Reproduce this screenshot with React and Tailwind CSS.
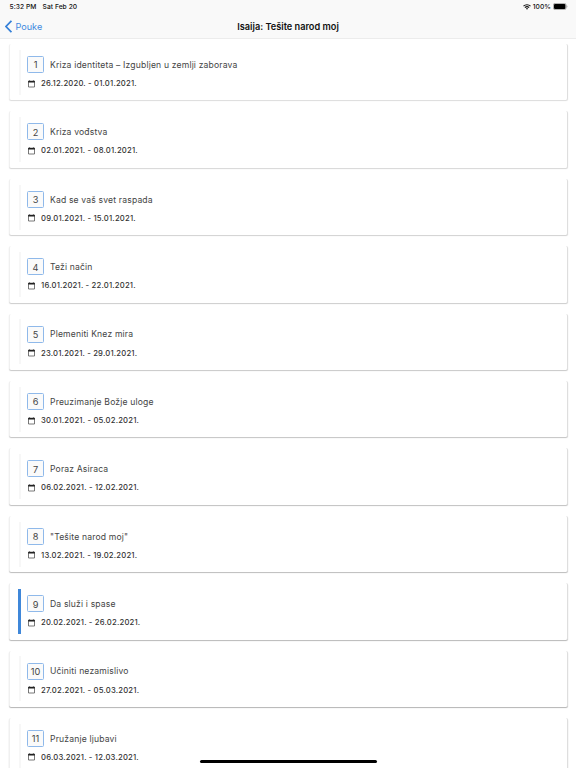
import React from 'react';

const lessons = [
  { title: 'Kriza identiteta – Izgubljen u zemlji zaborava', date: '26.12.2020. - 01.01.2021.', shadow: 'shadow-[0_1px_1px_#dcdcdc]' },
  { title: 'Kriza vođstva', date: '02.01.2021. - 08.01.2021.', shadow: 'shadow-[0_1px_1px_#d6d6d6]' },
  { title: 'Kad se vaš svet raspada', date: '09.01.2021. - 15.01.2021.', shadow: 'shadow-[0_1px_1px_#d1d1d1]' },
  { title: 'Teži način', date: '16.01.2021. - 22.01.2021.', shadow: 'shadow-[0_1px_1px_#cccccc]' },
  { title: 'Plemeniti Knez mira', date: '23.01.2021. - 29.01.2021.', shadow: 'shadow-[0_1px_1px_#c8c8c8]' },
  { title: 'Preuzimanje Božje uloge', date: '30.01.2021. - 05.02.2021.', shadow: 'shadow-[0_1px_1px_#c4c4c4]' },
  { title: 'Poraz Asiraca', date: '06.02.2021. - 12.02.2021.', shadow: 'shadow-[0_1px_1px_#c0c0c0]' },
  { title: '"Tešite narod moj"', date: '13.02.2021. - 19.02.2021.', shadow: 'shadow-[0_1px_1px_#bcbcbc]' },
  { title: 'Da služi i spase', date: '20.02.2021. - 26.02.2021.', shadow: 'shadow-[0_1px_1px_#b8b8b8]', current: true },
  { title: 'Učiniti nezamislivo', date: '27.02.2021. - 05.03.2021.', shadow: 'shadow-[0_1px_1px_#b4b4b4]' },
  { title: 'Pružanje ljubavi', date: '06.03.2021. - 12.03.2021.', shadow: 'shadow-[0_1px_1px_#b1b1b1]' },
];

function CalendarIcon() {
  return (
    <svg className="h-[8px] w-[7px] shrink-0" viewBox="0 0 7 8" fill="none">
      <path d="M0.5 1.8h6v5.2h-6z" stroke="#555" strokeWidth="0.8" />
      <path d="M0.1 0.8h6.8v1.6H0.1z" fill="#222" />
      <path d="M1.6 0.2v1M5.4 0.2v1" stroke="#333" strokeWidth="0.7" />
    </svg>
  );
}

function WifiIcon() {
  return (
    <svg className="h-[6px] w-[8px]" viewBox="0 0 16 12" fill="none" stroke="#111" strokeWidth="2.2">
      <path d="M1 4.4a10 10 0 0 1 14 0" />
      <path d="M3.8 7.3a6 6 0 0 1 8.4 0" />
      <path d="M5.9 9 8 11.6 10.1 9a3.1 3.1 0 0 0-4.2 0z" fill="#111" stroke="none" />
    </svg>
  );
}

function BatteryIcon() {
  return (
    <svg className="h-[7px] w-[15px]" viewBox="0 0 15 7" fill="none">
      <rect x="0.4" y="0.4" width="12.6" height="6.2" rx="1.6" stroke="#888" strokeWidth="0.7" />
      <rect x="1" y="1" width="11.4" height="5" rx="1" fill="#000" />
      <path d="M13.6 2.3c1 .3 1 2.1 0 2.4z" fill="#888" />
    </svg>
  );
}

function Header() {
  return (
    <header className="h-[39px] shrink-0 border-b border-[#ececec] bg-[#f9f9f9]">
      <div className="flex h-[14px] items-center justify-between pl-[9.5px] pr-[8.5px] text-[6.7px] font-medium leading-none tracking-[0.05px] text-[#111]">
        <div className="flex gap-[6px] pt-px">
          <span>5:32 PM</span>
          <span>Sat Feb 20</span>
        </div>
        <div className="flex items-center gap-[1.5px]">
          <WifiIcon />
          <span className="pt-px">100%</span>
          <BatteryIcon />
        </div>
      </div>
      <div className="grid h-[24px] grid-cols-[1fr_auto_1fr] items-center pt-px">
        <button className="flex items-center gap-[3.5px] pl-[5px] text-[9.1px] leading-none text-[#3f8ae0]">
          <svg className="h-[13px] w-[7px]" viewBox="0 0 7 13" fill="none">
            <path d="M6.4 0.8 1 6.5l5.4 5.7" stroke="#3580d8" strokeWidth="1.7" />
          </svg>
          Pouke
        </button>
        <h1 className="text-[9.2px] font-semibold leading-none text-[#111]">Isaija: Tešite narod moj</h1>
      </div>
    </header>
  );
}

function LessonCard({ number, lesson }) {
  return (
    <li className={`flex h-[56.4px] shrink-0 items-start rounded-[2px] border-l border-r border-l-[#f0f0f0] border-r-[#dedede] bg-white pl-[8px] pt-[5.8px] ${lesson.shadow}`}>
      <div className={`h-[45px] shrink-0 ${lesson.current ? 'mr-px w-[3px] bg-[#3f87d9]' : 'ml-px mr-px w-[2px] bg-[#f7f7f7]'}`} />
      <div className="pl-[5px] pt-[6.2px]">
        <div className="flex items-center gap-[6px]">
          <span className="flex h-[17px] w-[17px] items-center justify-center rounded-[1.5px] border border-[#8fb9ea] bg-[#fafafa] pt-px text-[9.2px] leading-none text-[#444]">
            {number}
          </span>
          <span className="whitespace-nowrap pt-[1.4px] text-[8.6px] leading-none tracking-[0.16px] text-[#444]">{lesson.title}</span>
        </div>
        <div className="mt-[6.6px] flex h-[8px] items-center gap-[6px] pl-px">
          <CalendarIcon />
          <span className="whitespace-nowrap pt-[0.5px] text-[7.7px] font-medium leading-none tracking-[0.19px] text-[#333]">{lesson.date}</span>
        </div>
      </div>
    </li>
  );
}

function App() {
  return (
    <div className="relative flex h-[768px] w-[576px] flex-col overflow-hidden bg-white font-['Inter',sans-serif]">
      <Header />
      <ul className="flex min-h-0 flex-1 flex-col gap-[11px] overflow-hidden pl-[9px] pr-[8px] pt-[5px]">
        {lessons.map((lesson, i) => (
          <LessonCard key={lesson.title} number={i + 1} lesson={lesson} />
        ))}
      </ul>
      {/* Home indicator */}
      <div className="absolute bottom-[5px] left-[199.5px] h-[3px] w-[177px] rounded-full bg-black" />
    </div>
  );
}

export default App;
